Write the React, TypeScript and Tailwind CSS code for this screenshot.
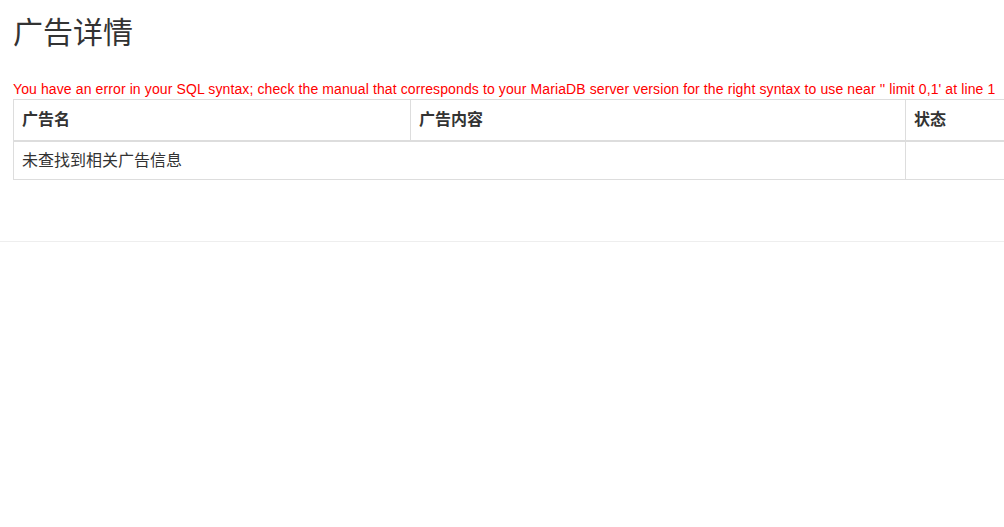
export default function App() {
  const font = { fontFamily: '"Liberation Sans", "Noto Sans CJK SC", sans-serif' };
  return (
    <div className="w-[1004px] h-[527px] overflow-hidden bg-white text-[#333]" style={font}>
      <div className="pl-[13px]">
        <h1 className="text-[30px] leading-[33px] pt-[16px] font-normal text-[#333]">广告详情</h1>
        <div className="mt-[30px] text-[14px] leading-[20px] tracking-[0.11px] text-[#ff0000] whitespace-nowrap">
          You have an error in your SQL syntax; check the manual that corresponds to your MariaDB server version for the right syntax to use near '' limit 0,1' at line 1
        </div>
        <table className="border-collapse border border-[#ddd] text-[16px] leading-[23px] w-[1100px] table-fixed">
          <thead>
            <tr>
              <th className="w-[397px] text-left font-bold px-[8px] py-[8px] border border-[#ddd] border-b-2 h-[41px]">广告名</th>
              <th className="w-[495px] text-left font-bold px-[8px] py-[8px] border border-[#ddd] border-b-2">广告内容</th>
              <th className="text-left font-bold px-[8px] py-[8px] border border-[#ddd] border-b-2">状态</th>
            </tr>
          </thead>
          <tbody>
            <tr>
              <td colSpan={2} className="px-[8px] py-[7px] border border-[#ddd] h-[39px]">未查找到相关广告信息</td>
              <td className="px-[8px] py-[7px] border border-[#ddd]"></td>
            </tr>
          </tbody>
        </table>
      </div>
      <div className="mt-[61px] border-t border-[#eee]"></div>
    </div>
  );
}
